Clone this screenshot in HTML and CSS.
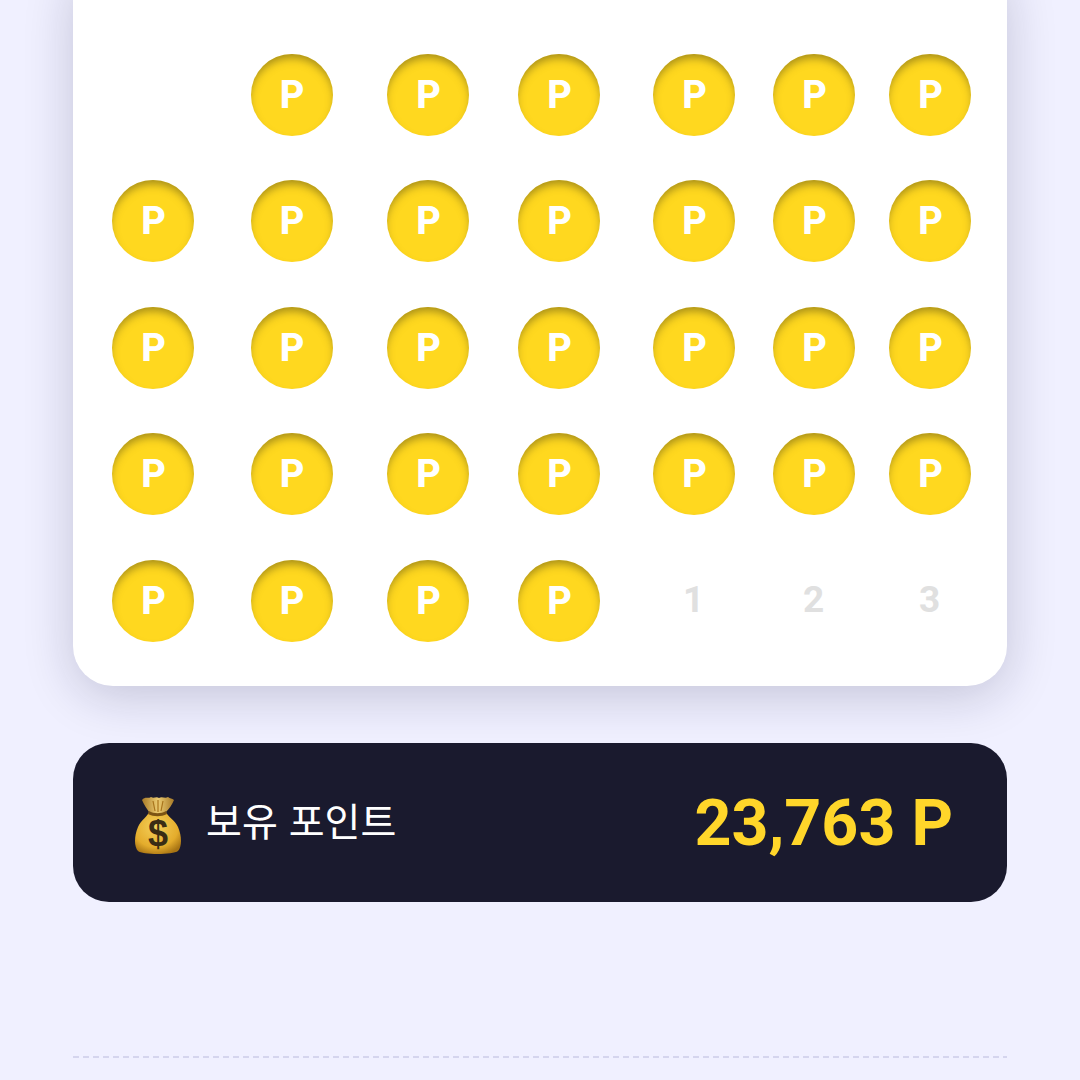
FILE: index.html
```html
<!DOCTYPE html>
<html lang="ko">
<head>
  <meta charset="UTF-8" />
  <meta name="viewport" content="width=device-width, initial-scale=1.0"/>
  <title>포인트 출석</title>
  <link rel="stylesheet" href="styles.css">
</head>
<body>
  <div class="page">
    <div class="card">
      <div class="days">
        <div class="day"></div>
        <div class="day"><span class="coin">P</span></div>
        <div class="day"><span class="coin">P</span></div>
        <div class="day"><span class="coin">P</span></div>
        <div class="day"><span class="coin">P</span></div>
        <div class="day"><span class="coin">P</span></div>
        <div class="day"><span class="coin">P</span></div>

        <div class="day"><span class="coin">P</span></div>
        <div class="day"><span class="coin">P</span></div>
        <div class="day"><span class="coin">P</span></div>
        <div class="day"><span class="coin">P</span></div>
        <div class="day"><span class="coin">P</span></div>
        <div class="day"><span class="coin">P</span></div>
        <div class="day"><span class="coin">P</span></div>

        <div class="day"><span class="coin">P</span></div>
        <div class="day"><span class="coin">P</span></div>
        <div class="day"><span class="coin">P</span></div>
        <div class="day"><span class="coin">P</span></div>
        <div class="day"><span class="coin">P</span></div>
        <div class="day"><span class="coin">P</span></div>
        <div class="day"><span class="coin">P</span></div>

        <div class="day"><span class="coin">P</span></div>
        <div class="day"><span class="coin">P</span></div>
        <div class="day"><span class="coin">P</span></div>
        <div class="day"><span class="coin">P</span></div>
        <div class="day"><span class="coin">P</span></div>
        <div class="day"><span class="coin">P</span></div>
        <div class="day"><span class="coin">P</span></div>

        <div class="day"><span class="coin">P</span></div>
        <div class="day"><span class="coin">P</span></div>
        <div class="day"><span class="coin">P</span></div>
        <div class="day"><span class="coin">P</span></div>
        <div class="day"><span class="num">1</span></div>
        <div class="day"><span class="num">2</span></div>
        <div class="day"><span class="num">3</span></div>
      </div>
    </div>

    <div class="points">
      <div class="points-label">
        <svg class="bag" viewBox="0 0 48 60" width="48" height="60" aria-hidden="true">
          <defs>
            <radialGradient id="bagBody" cx="45%" cy="35%" r="70%">
              <stop offset="0" stop-color="#f4d05a"/>
              <stop offset="0.7" stop-color="#e4ac2c"/>
              <stop offset="1" stop-color="#a87414"/>
            </radialGradient>
            <linearGradient id="bagTop" x1="0" y1="0" x2="1" y2="0">
              <stop offset="0" stop-color="#a87a28"/>
              <stop offset="0.5" stop-color="#eccb70"/>
              <stop offset="1" stop-color="#a87a28"/>
            </linearGradient>
          </defs>
          <path d="M15 16C14 20 7 24 4 31C0 40 0 51 4 55C8 59 39 59 44 55C48 51 48 40 44 31C41 24 33 20 32 16Z" fill="url(#bagBody)"/>
          <path d="M8 4C11 0 14 3 17 1C20 3 22 0 25 2C28 0 31 3 34 1C36 3 38 2 40 4C38 9 35 13 32 16C26 18 20 18 15 16C13 13 10 9 8 4Z" fill="url(#bagTop)"/>
          <path d="M15 15C20 18 27 18 32 15L33 18C27 21 20 21 14 18Z" fill="#7c5414"/>
          <path d="M19 5L21 15M24 4V16M29 5L27 15" stroke="#a8741c" stroke-width="1.2" fill="none"/>
          <text class="bag-sign" x="24" y="50" text-anchor="middle">$</text>
        </svg>
        <span class="points-title">보유 포인트</span>
      </div>
      <div class="points-value">23,763 P</div>
    </div>

    <div class="divider"></div>
  </div>
</body>
</html>
```

FILE: styles.css
```css
body {
  margin: 0;
  background: #f0f0ff;
  font-family: 'Roboto', 'Noto Sans CJK KR', sans-serif;
}
.page {
  height: 1080px;
  overflow: hidden;
  padding: 0 73px;
  box-sizing: border-box;
}
.card {
  margin-top: -40px;
  padding: 71.6px 9px 22px 10px;
  background: #fff;
  border-radius: 40px;
  box-shadow: 0 10px 50px rgba(20, 20, 60, 0.2);
}
.days {
  display: grid;
  grid-template-columns: 140px 137px 136px 126px 144px 96px 136px;
  grid-auto-rows: 126.5px;
}
.day {
  display: flex;
  align-items: center;
  justify-content: center;
}
.coin {
  width: 82px;
  height: 82px;
  border-radius: 50%;
  display: flex;
  align-items: center;
  justify-content: center;
  background: #ffd81f;
  box-shadow: inset 0 6px 8px -2px rgba(80, 70, 20, 0.5);
  color: #fff;
  font-size: 38px;
  font-weight: 800;
  line-height: 1;
  padding-left: 1px;
  box-sizing: border-box;
}
.num {
  color: #e0e0e0;
  font-size: 37px;
  font-weight: 700;
  line-height: 1;
  margin: 0 1px 2px 0;
}
.points {
  margin-top: 57px;
  height: 159px;
  background: #1a1a2e;
  border-radius: 36px;
  display: flex;
  align-items: center;
  justify-content: space-between;
  padding: 0 54px 0 61px;
}
.points-label {
  display: flex;
  align-items: center;
  gap: 24px;
  color: #fff;
  font-family: 'Noto Sans CJK KR', sans-serif;
  font-size: 39px;
  font-weight: 400;
}
.points-title {
  margin-bottom: 7px;
}
.bag {
  display: block;
  margin-top: 6px;
}
.bag-sign {
  font-family: 'Liberation Sans', sans-serif;
  font-size: 36px;
  font-weight: 700;
  fill: #3a2c14;
}
.points-value {
  margin-top: 2px;
  color: #ffd62a;
  font-size: 64.5px;
  font-weight: 700;
  line-height: 1;
}
.divider {
  margin-top: 154px;
  height: 2px;
  background: repeating-linear-gradient(90deg, #d5d5ee 0, #d5d5ee 6px, transparent 6px, transparent 10px);
}
```
